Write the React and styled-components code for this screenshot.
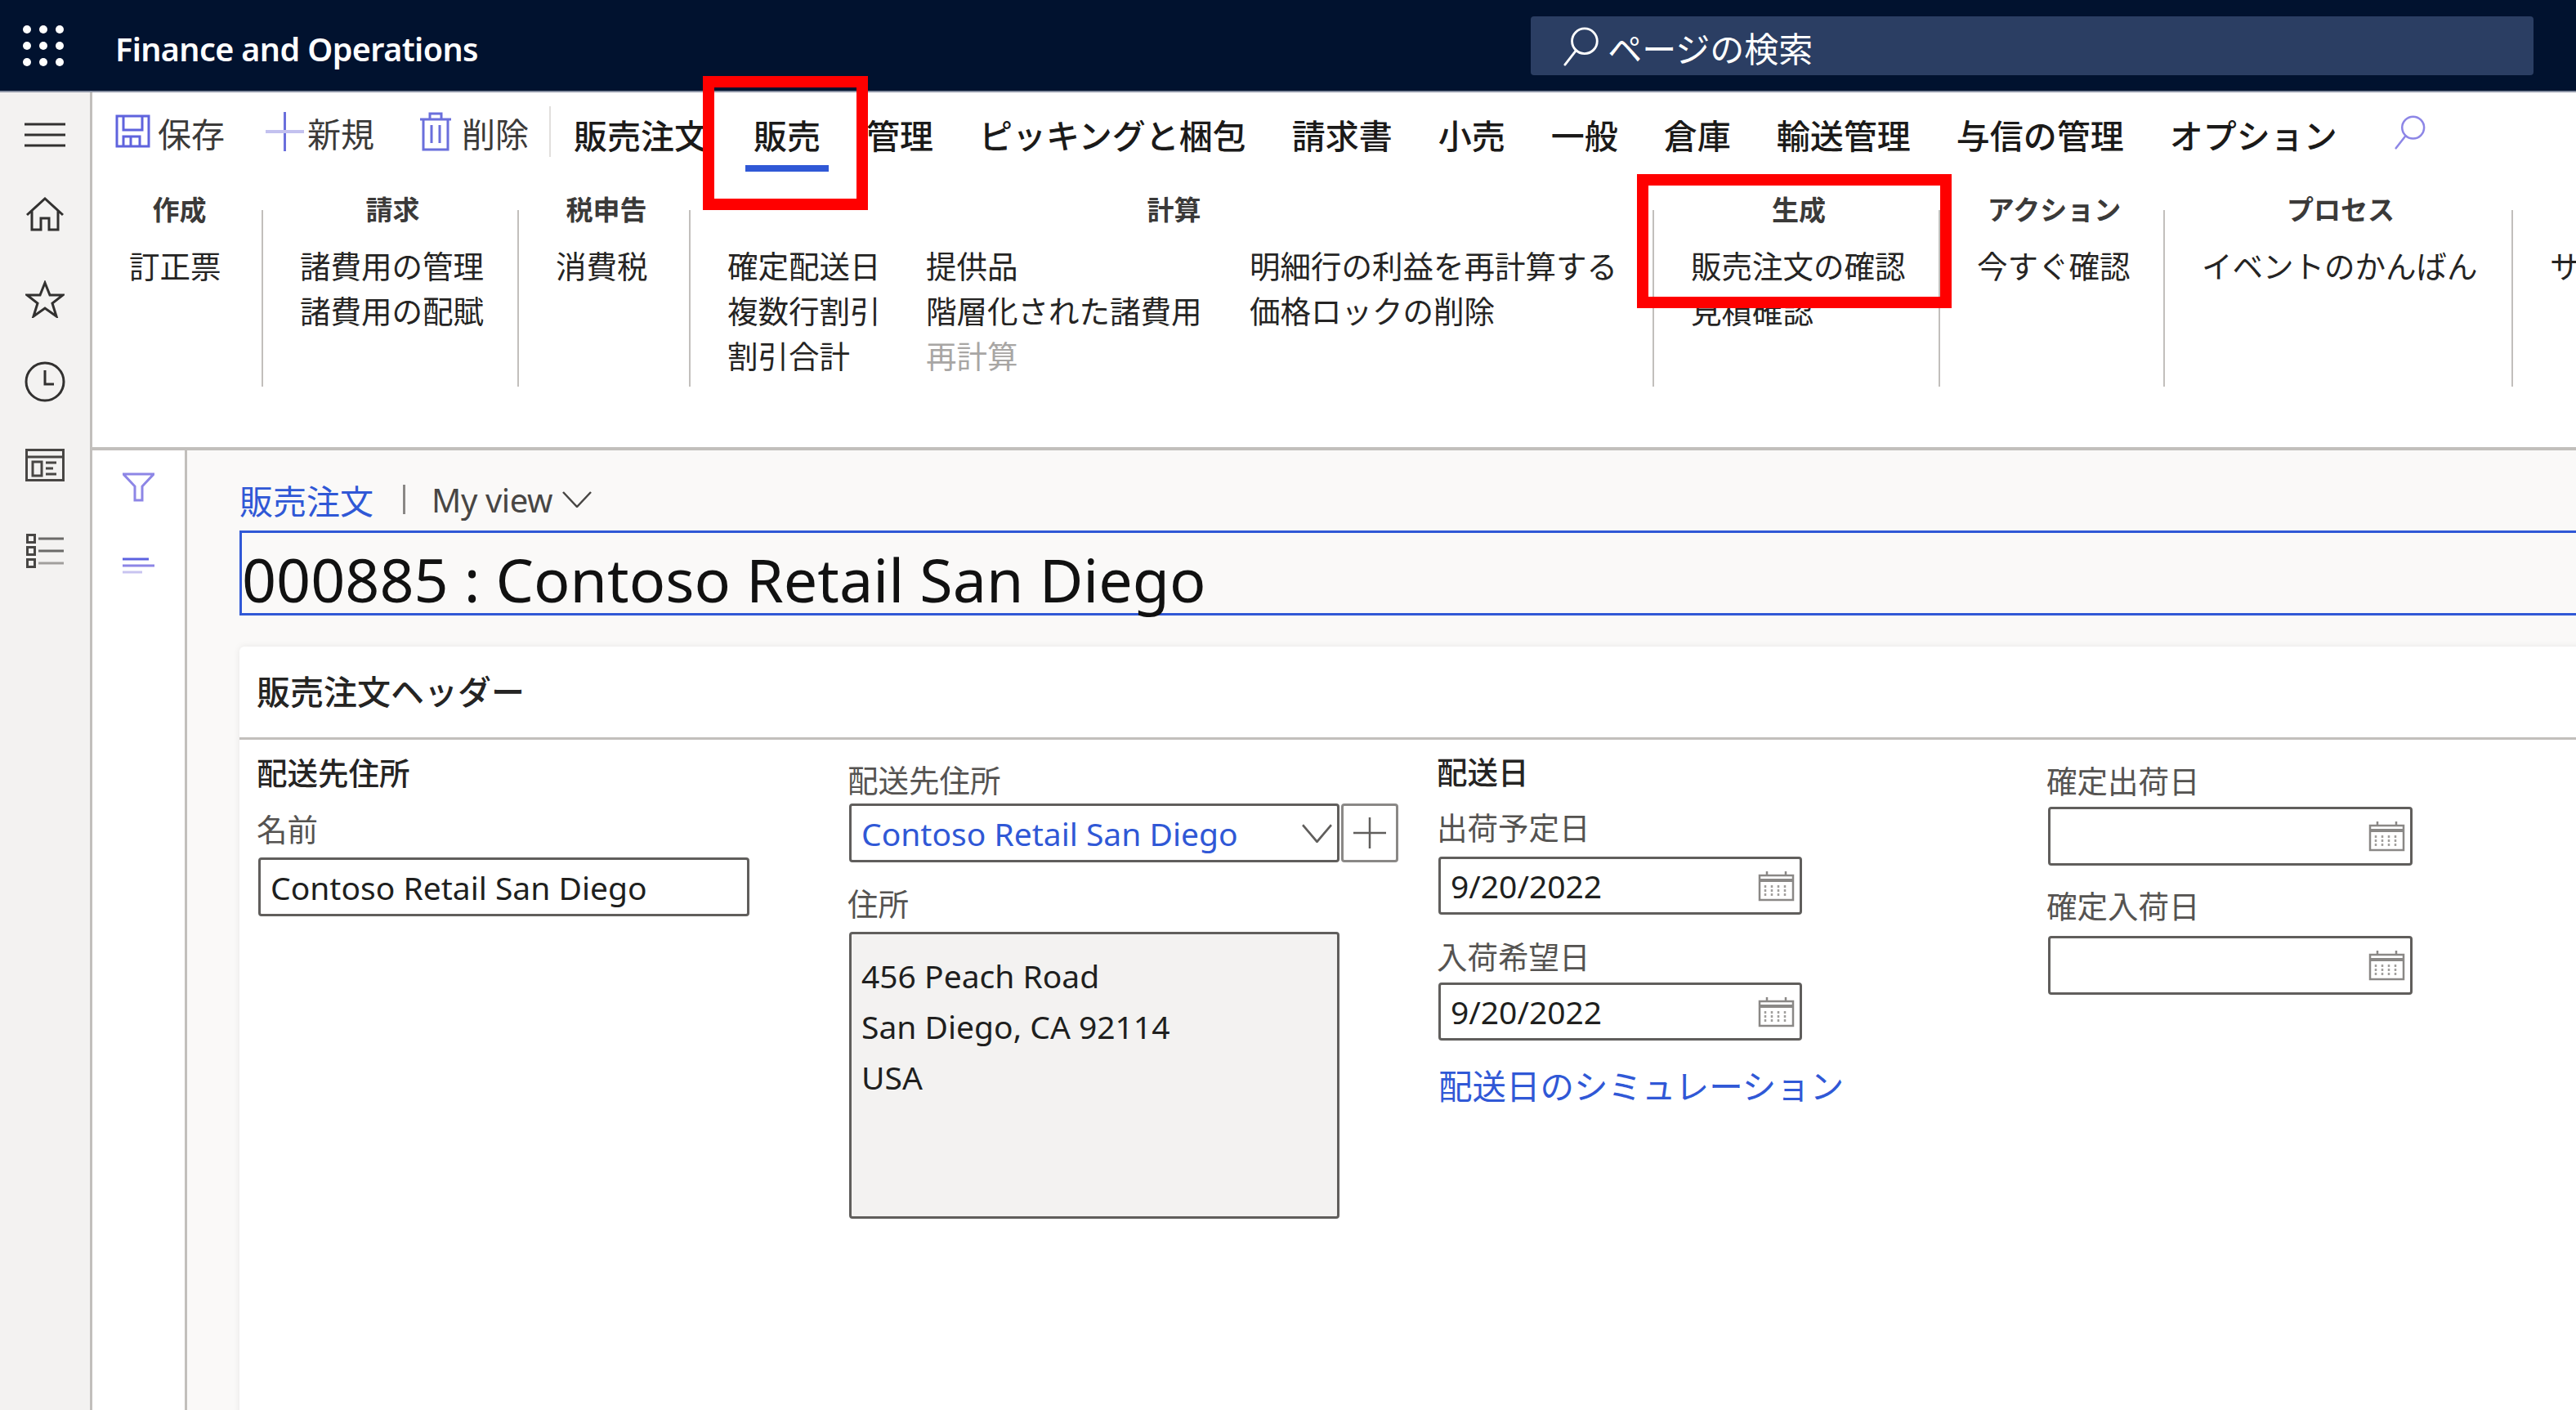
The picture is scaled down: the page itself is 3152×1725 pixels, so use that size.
import React from "react";
import styled, { createGlobalStyle } from "styled-components";

const FONT = `"Noto Sans", "Noto Sans CJK JP", sans-serif`;

const GlobalStyle = createGlobalStyle`
  * { box-sizing: border-box; }
  html, body { margin: 0; padding: 0; background: #fff; }
  body { font-family: ${FONT}; color: #201f1e; }
`;

const ACCENT = "#3058d6";
const LAVENDER = "#8d86e6";
const GREY_LINE = "#c2bfbc";

const Shell = styled.div`
  position: relative;
  width: 3152px;
  height: 1725px;
  overflow: hidden;
  display: flex;
  flex-direction: column;
`;

const Header = styled.header`
  height: 113px;
  flex: none;
  display: flex;
  align-items: center;
  background: #01122f;
  border-bottom: 2px solid #8b93a5;
  padding-left: 28px;
`;

const AppName = styled.div`
  margin-left: 63px;
  padding-top: 8px;
  color: #fff;
  font-size: 39.5px;
  font-weight: 600;
  letter-spacing: -0.6px;
  white-space: nowrap;
`;

const SearchBox = styled.div`
  margin-left: auto;
  margin-right: 52px;
  width: 1227px;
  height: 72px;
  border-radius: 4px;
  background: #2b3e63;
  display: flex;
  align-items: center;
  gap: 10px;
  padding: 3px 0 0 40px;
  color: #fff;
  font-size: 42px;
`;

const Body = styled.div`
  flex: 1;
  display: flex;
  min-height: 0;
`;

const Rail = styled.nav`
  width: 113px;
  flex: none;
  background: #f3f2f1;
  border-right: 3px solid ${GREY_LINE};
  display: flex;
  flex-direction: column;
  align-items: center;
  padding-top: 37px;
`;

const RailSlot = styled.div`
  display: flex;
  margin-top: ${(p) => p.$top}px;
`;

const Main = styled.div`
  flex: 1;
  min-width: 0;
  display: flex;
  flex-direction: column;
`;

const Ribbon = styled.div`
  height: 438px;
  flex: none;
  background: #fff;
  border-bottom: 4px solid ${GREY_LINE};
`;

const ActionBar = styled.div`
  height: 100px;
  display: flex;
  align-items: flex-start;
  padding-left: 28px;
  font-size: 41px;
  white-space: nowrap;
`;

const Action = styled.div`
  height: 97px;
  display: flex;
  align-items: center;
  gap: ${(p) => p.$gap}px;
  margin-right: ${(p) => p.$after}px;
  color: #3b3a39;
  svg { margin-top: -2px; }
`;

const BarSep = styled.div`
  width: 2px;
  height: 62px;
  margin-top: 17px;
  background: #e1dfdd;
`;

const Tab = styled.div`
  height: 97px;
  margin: 0 18px;
  padding: 12px 10px 0;
  display: flex;
  align-items: center;
  border-bottom: 8px solid ${(p) => (p.$active ? ACCENT : "transparent")};
  color: #1b1a19;
  font-weight: 500;
`;

const TabSearch = styled.div`
  margin: 28px 0 0 42px;
  display: flex;
`;

const GroupRow = styled.div`
  display: flex;
  align-items: flex-start;
  padding-top: 25px;
  white-space: nowrap;
`;

const Group = styled.section`
  width: ${(p) => p.$w}px;
  flex: none;
`;

const GroupTitle = styled.div`
  height: 38px;
  line-height: 38px;
  margin-bottom: 22px;
  padding-left: 6px;
  text-align: center;
  font-size: 33px;
  font-weight: 700;
  color: #3b3a39;
`;

const GroupColumns = styled.div`
  display: grid;
  grid-template-columns: ${(p) => p.$cols || "auto"};
  padding-left: 45px;
`;

const RibbonItem = styled.div`
  height: 55px;
  line-height: 55px;
  font-size: 37.5px;
  color: ${(p) => (p.$disabled ? "#a8a6a4" : "#252423")};
`;

const GroupSep = styled.div`
  width: 2px;
  height: 216px;
  margin-top: 19px;
  flex: none;
  background: ${GREY_LINE};
`;

const Content = styled.div`
  flex: 1;
  min-height: 0;
  display: flex;
`;

const FilterPane = styled.aside`
  width: 116px;
  flex: none;
  background: #fff;
  border-right: 3px solid ${GREY_LINE};
  display: flex;
  flex-direction: column;
  align-items: center;
  gap: 68px;
  padding-top: 27px;
`;

const Page = styled.main`
  flex: 1;
  min-width: 0;
  background: #faf9f8;
  padding: 35px 0 0 64px;
`;

const Breadcrumb = styled.div`
  height: 50px;
  display: flex;
  align-items: center;
  font-size: 41px;
  white-space: nowrap;
`;

const Crumb = styled.span`
  color: ${ACCENT};
`;

const CrumbBar = styled.span`
  width: 3px;
  height: 36px;
  margin: 0 32px 0 36px;
  background: #8a8886;
`;

const ViewName = styled.span`
  font-size: 40px;
  color: #484644;
  margin-right: 12px;
  letter-spacing: -0.4px;
`;

const TitleBox = styled.div`
  width: 3000px;
  height: 104px;
  margin-top: 13px;
  padding-top: 14px;
  border: 3px solid ${ACCENT};
  display: flex;
  align-items: center;
  font-size: 73.6px;
  color: #111;
  white-space: nowrap;
`;

const Card = styled.section`
  width: 3000px;
  height: 1000px;
  margin-top: 38px;
  background: #fff;
  border-radius: 6px 0 0 0;
  box-shadow: 0 0 8px rgba(0, 0, 0, 0.08);
`;

const CardHeader = styled.h2`
  height: 114px;
  margin: 0;
  padding: 0 0 6px 21px;
  display: flex;
  align-items: center;
  border-bottom: 3px solid ${GREY_LINE};
  font-size: 41px;
  font-weight: 500;
  color: #252423;
`;

const FieldGrid = styled.div`
  display: grid;
  grid-template-columns: 723px 721px 746px 500px;
  padding-left: 21px;
`;

const FieldCol = styled.div`
  display: flex;
  flex-direction: column;
  align-items: flex-start;
  padding-top: ${(p) => p.$top}px;
`;

const SectionTitle = styled.div`
  height: 40px;
  line-height: 40px;
  font-size: 37.5px;
  font-weight: 500;
  color: #252423;
`;

const FieldLabel = styled.label`
  height: 40px;
  line-height: 40px;
  margin-top: ${(p) => p.$top || 0}px;
  font-size: 37.5px;
  color: #555351;
`;

const Input = styled.div`
  width: ${(p) => p.$w}px;
  height: ${(p) => p.$h || 72}px;
  margin-top: ${(p) => p.$top}px;
  padding: 0 6px 0 12px;
  display: flex;
  align-items: center;
  justify-content: space-between;
  flex: none;
  border: 3px solid #605e5c;
  border-radius: 4px;
  background: #fff;
  font-size: 39px;
  line-height: 1;
  color: ${(p) => p.$color || "#201f1e"};
  white-space: nowrap;
`;

const FieldInset = styled.div`
  display: flex;
  flex-direction: column;
  align-items: flex-start;
  margin-left: 2px;
`;

const ComboRow = styled.div`
  display: flex;
  gap: 2px;
  margin: 8px 0 0 2px;
`;

const AddButton = styled.div`
  width: 70px;
  height: 72px;
  display: flex;
  align-items: center;
  justify-content: center;
  border: 3px solid #8a8886;
  border-radius: 4px;
`;

const AddressBox = styled.div`
  width: 600px;
  height: 351px;
  margin: 14px 0 0 2px;
  padding: 20px 12px;
  border: 3px solid #605e5c;
  border-radius: 4px;
  background: #f3f2f1;
  font-size: 39px;
  line-height: 62px;
  color: #201f1e;
`;

const SimLink = styled.div`
  margin-top: 36px;
  margin-left: 2px;
  height: 40px;
  line-height: 40px;
  font-size: 41.5px;
  color: ${ACCENT};
  white-space: nowrap;
`;

const Highlight = styled.div`
  position: absolute;
  left: ${(p) => p.$x}px;
  top: ${(p) => p.$y}px;
  width: ${(p) => p.$w}px;
  height: ${(p) => p.$h}px;
  border: 14px solid #ff0000;
  pointer-events: none;
`;

const Waffle = () => (
  <svg width="50" height="50" viewBox="0 0 50 50" fill="#fff">
    {[5, 25, 45].flatMap((y) =>
      [5, 25, 45].map((x) => <circle key={`${x}-${y}`} cx={x} cy={y} r="5" />)
    )}
  </svg>
);

const SearchGlass = ({ size = 48, color = "#fff", sw = 3 }) => (
  <svg width={size * 0.92} height={size} viewBox="0 0 46 50" fill="none" stroke={color} strokeWidth={sw}>
    <circle cx="27" cy="18" r="16" />
    <path d="M16 30 L2 48" strokeLinecap="round" />
  </svg>
);

const Hamburger = () => (
  <svg width="50" height="30" viewBox="0 0 50 30" stroke="#323130" strokeWidth="3">
    <path d="M0 2h50M0 15h50M0 28h50" />
  </svg>
);

const HomeIcon = () => (
  <svg width="46" height="42" viewBox="0 0 46 42" fill="none" stroke="#323130" strokeWidth="3">
    <path d="M1 22 L23 2 L45 22 M7 17 V40 H18 V26 H28 V40 H39 V17" />
  </svg>
);

const StarIcon = () => (
  <svg width="48" height="46" viewBox="0 0 48 46" fill="none" stroke="#323130" strokeWidth="3">
    <path d="M24 3 L30 18 L46 18 L33 28 L38 44 L24 34 L10 44 L15 28 L2 18 L18 18 Z" />
  </svg>
);

const ClockIcon = () => (
  <svg width="50" height="50" viewBox="0 0 50 50" fill="none" stroke="#323130" strokeWidth="3">
    <circle cx="25" cy="25" r="23" />
    <path d="M25 11 V28 H36" />
  </svg>
);

const WorkspaceIcon = () => (
  <svg width="48" height="40" viewBox="0 0 48 40" fill="none" stroke="#484644" strokeWidth="3">
    <rect x="1.5" y="1.5" width="45" height="37" />
    <path d="M2 10 H46" />
    <rect x="9" y="16" width="11" height="17" />
    <path d="M25 17 H38 M25 24 H34 M25 31 H38" />
  </svg>
);

const ListIcon = () => (
  <svg width="46" height="42" viewBox="0 0 46 42" fill="none" stroke="#484644" strokeWidth="3">
    <rect x="1.5" y="1.5" width="9" height="9" />
    <rect x="1.5" y="16.5" width="9" height="9" />
    <rect x="1.5" y="31.5" width="9" height="9" />
    <path d="M15 6 H46 M15 21 H46" stroke="#6b6a68" />
    <path d="M15 36 H46" stroke="#a19f9d" />
  </svg>
);

const SaveIcon = () => (
  <svg width="43" height="41" viewBox="0 0 43 41" fill="none" stroke="#5f63dd" strokeWidth="3">
    <path d="M2 2 H41 V39 H2 Z" />
    <path d="M10 2 V19 H33 V2" />
    <path d="M10 39 V27 H30 V39 M19 27 V39" />
  </svg>
);

const PlusBig = () => (
  <svg width="47" height="48" viewBox="0 0 47 48" fill="none">
    <path d="M23.5 0 V48" stroke="#6a6fdc" strokeWidth="3" />
    <path d="M0 24 H47" stroke="#c3c1ef" strokeWidth="4" />
  </svg>
);

const TrashIcon = () => (
  <svg width="38" height="48" viewBox="0 0 38 48" fill="none" stroke="#6a6fdc" strokeWidth="3">
    <path d="M0 9 H38 M12 9 V2 H26 V9" />
    <path d="M4 9 V46 H34 V9" />
    <path d="M14 16 V38 M24 16 V38" />
  </svg>
);

const FilterIcon = () => (
  <svg width="39" height="36" viewBox="0 0 39 36" fill="none" stroke={LAVENDER} strokeWidth="3">
    <path d="M1 2 H38 L24 17 V34 H15 V17 Z" />
  </svg>
);

const SummaryLines = () => (
  <svg width="39" height="20" viewBox="0 0 39 20" fill="none" strokeWidth="3">
    <path d="M0 2 H32" stroke="#5c62e0" />
    <path d="M0 10 H39" stroke={LAVENDER} />
    <path d="M0 18 H24" stroke="#c8c4f0" />
  </svg>
);

const Chevron = ({ w = 36, h = 20, color = "#484644" }) => (
  <svg width={w} height={h} viewBox="0 0 36 20" fill="none" stroke={color} strokeWidth="2.5" preserveAspectRatio="none">
    <path d="M1 1 L18 19 L35 1" />
  </svg>
);

const PlusSmall = () => (
  <svg width="40" height="38" viewBox="0 0 40 38" fill="none" stroke="#605e5c" strokeWidth="2.5">
    <path d="M20 0 V38 M0 19 H40" />
  </svg>
);

const CalendarIcon = () => (
  <svg width="45" height="38" viewBox="0 0 45 38" fill="none" stroke="#8a8886" strokeWidth="2.5">
    <path d="M2 6 H43 V36 H2 Z" />
    <path d="M2 12 H43" strokeWidth="4" />
    <path d="M11 1 V6 M34 1 V6" />
    <path d="M9 18 V32 M17 18 V32 M25 18 V32 M33 18 V32" strokeDasharray="3 2" stroke="#a19f9d" />
  </svg>
);

const tabs = [
  "販売注文",
  "販売",
  "管理",
  "ピッキングと梱包",
  "請求書",
  "小売",
  "一般",
  "倉庫",
  "輸送管理",
  "与信の管理",
  "オプション",
];

const groups = [
  { title: "作成", w: 207, columns: [["訂正票"]] },
  { title: "請求", w: 311, columns: [["諸費用の管理", "諸費用の配賦"]] },
  { title: "税申告", w: 208, columns: [["消費税"]] },
  {
    title: "計算",
    w: 1177,
    cols: "243px 396px auto",
    columns: [
      ["確定配送日", "複数行割引", "割引合計"],
      ["提供品", "階層化された諸費用", "再計算"],
      ["明細行の利益を再計算する", "価格ロックの削除"],
    ],
  },
  { title: "生成", w: 348, columns: [["販売注文の確認", "見積確認"]] },
  { title: "アクション", w: 273, columns: [["今すぐ確認"]] },
  { title: "プロセス", w: 424, columns: [["イベントのかんばん"]] },
  { title: "\u00a0", w: 300, columns: [["サービス"]] },
];

const railIcons = [
  { top: 0, icon: <Hamburger /> },
  { top: 61, icon: <HomeIcon /> },
  { top: 60, icon: <StarIcon /> },
  { top: 53, icon: <ClockIcon /> },
  { top: 57, icon: <WorkspaceIcon /> },
  { top: 64, icon: <ListIcon /> },
];

export default function App() {
  return (
    <Shell>
      <GlobalStyle />
      <Header>
        <Waffle />
        <AppName>Finance and Operations</AppName>
        <SearchBox>
          <SearchGlass />
          ページの検索
        </SearchBox>
      </Header>
      <Body>
        <Rail>
          {railIcons.map((item, i) => (
            <RailSlot key={i} $top={item.top}>
              {item.icon}
            </RailSlot>
          ))}
        </Rail>
        <Main>
          <Ribbon>
            <ActionBar>
              <Action $gap={9} $after={50}>
                <SaveIcon />
                保存
              </Action>
              <Action $gap={4} $after={56}>
                <PlusBig />
                新規
              </Action>
              <Action $gap={13} $after={25}>
                <TrashIcon />
                削除
              </Action>
              <BarSep />
              {tabs.map((t) => (
                <Tab key={t} $active={t === "販売"}>
                  {t}
                </Tab>
              ))}
              <TabSearch>
                <SearchGlass size={42} color={LAVENDER} sw={3} />
              </TabSearch>
            </ActionBar>
            <GroupRow>
              {groups.map((g, i) => (
                <React.Fragment key={i}>
                  {i > 0 && <GroupSep />}
                  <Group $w={g.w}>
                    <GroupTitle>{g.title}</GroupTitle>
                    <GroupColumns $cols={g.cols}>
                      {g.columns.map((col, c) => (
                        <div key={c}>
                          {col.map((label) => (
                            <RibbonItem key={label} $disabled={label === "再計算"}>
                              {label}
                            </RibbonItem>
                          ))}
                        </div>
                      ))}
                    </GroupColumns>
                  </Group>
                </React.Fragment>
              ))}
            </GroupRow>
          </Ribbon>
          <Content>
            <FilterPane>
              <FilterIcon />
              <SummaryLines />
            </FilterPane>
            <Page>
              <Breadcrumb>
                <Crumb>販売注文</Crumb>
                <CrumbBar />
                <ViewName>My view</ViewName>
                <Chevron />
              </Breadcrumb>
              <TitleBox>000885 : Contoso Retail San Diego</TitleBox>
              <Card>
                <CardHeader>販売注文ヘッダー</CardHeader>
                <FieldGrid>
                  <FieldCol $top={21}>
                    <SectionTitle>配送先住所</SectionTitle>
                    <FieldLabel $top={29}>名前</FieldLabel>
                    <FieldInset>
                      <Input $w={601} $top={14}>
                        Contoso Retail San Diego
                      </Input>
                    </FieldInset>
                  </FieldCol>
                  <FieldCol $top={30}>
                    <FieldLabel>配送先住所</FieldLabel>
                    <ComboRow>
                      <Input $w={600} $top={0} $color={ACCENT}>
                        Contoso Retail San Diego
                        <Chevron w={37} h={23} color="#605e5c" />
                      </Input>
                      <AddButton>
                        <PlusSmall />
                      </AddButton>
                    </ComboRow>
                    <FieldLabel $top={31}>住所</FieldLabel>
                    <AddressBox>
                      456 Peach Road
                      <br />
                      San Diego, CA 92114
                      <br />
                      USA
                    </AddressBox>
                  </FieldCol>
                  <FieldCol $top={20}>
                    <SectionTitle>配送日</SectionTitle>
                    <FieldLabel $top={28}>出荷予定日</FieldLabel>
                    <FieldInset>
                      <Input $w={445} $h={71} $top={15}>
                        9/20/2022
                        <CalendarIcon />
                      </Input>
                    </FieldInset>
                    <FieldLabel $top={32}>入荷希望日</FieldLabel>
                    <FieldInset>
                      <Input $w={445} $h={71} $top={11}>
                        9/20/2022
                        <CalendarIcon />
                      </Input>
                    </FieldInset>
                    <SimLink>配送日のシミュレーション</SimLink>
                  </FieldCol>
                  <FieldCol $top={31}>
                    <FieldLabel>確定出荷日</FieldLabel>
                    <FieldInset>
                      <Input $w={446} $top={11}>
                        <span />
                        <CalendarIcon />
                      </Input>
                    </FieldInset>
                    <FieldLabel $top={30}>確定入荷日</FieldLabel>
                    <FieldInset>
                      <Input $w={446} $top={16}>
                        <span />
                        <CalendarIcon />
                      </Input>
                    </FieldInset>
                  </FieldCol>
                </FieldGrid>
              </Card>
            </Page>
          </Content>
        </Main>
      </Body>
      <Highlight $x={860} $y={93} $w={202} $h={164} />
      <Highlight $x={2003} $y={213} $w={385} $h={164} />
    </Shell>
  );
}
